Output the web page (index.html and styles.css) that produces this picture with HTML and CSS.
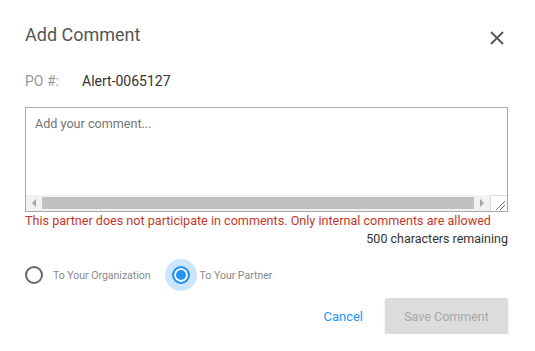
FILE: index.html
```html
<!DOCTYPE html>
<html lang="en">
<head>
    <meta charset="UTF-8">
    <meta name="viewport" content="width=device-width, initial-scale=1.0">
    <title>Add Comment</title>
    <link rel="stylesheet" href="styles.css">
</head>
<body>
    <div class="dialog">
        <div class="dialog-header">
            <h1 class="dialog-title">Add Comment</h1>
            <button class="close" aria-label="Close">
                <svg width="14" height="14" viewBox="0 0 14 14">
                    <path d="M1 1 L13 13 M13 1 L1 13" stroke="#555" stroke-width="1.8" fill="none"/>
                </svg>
            </button>
        </div>

        <div class="po-row">
            <span class="po-label">PO #:</span>
            <span class="po-value">Alert-0065127</span>
        </div>

        <div class="comment-box">
            <textarea class="comment-input" placeholder="Add your comment..."></textarea>
            <div class="hscroll">
                <span class="scroll-btn"><span class="tri-left"></span></span>
                <span class="scroll-thumb"></span>
                <span class="scroll-btn"><span class="tri-right"></span></span>
                <span class="resizer">
                    <svg width="16" height="16" viewBox="0 0 16 16">
                        <path d="M14 5 L5 14 M14 9 L9 14" stroke="#777" stroke-width="1" fill="none"/>
                    </svg>
                </span>
            </div>
        </div>
        <div class="error-msg">This partner does not participate in comments. Only internal comments are allowed</div>
        <div class="char-count">500 characters remaining</div>

        <div class="audience">
            <label class="radio">
                <span class="radio-mark"></span>
                To Your Organization
            </label>
            <label class="radio checked">
                <span class="radio-mark"></span>
                To Your Partner
            </label>
        </div>

        <div class="actions">
            <button class="btn-link">Cancel</button>
            <button class="btn-save" disabled>Save Comment</button>
        </div>
    </div>
</body>
</html>
```

FILE: styles.css
```css
body {
    margin: 0;
    background-color: #fff;
    font-family: Roboto, 'Liberation Sans', Arial, sans-serif;
    color: #333;
}
.dialog {
    padding: 0 27px 0 25px;
}
.dialog-header {
    display: flex;
    justify-content: space-between;
    align-items: center;
    padding-top: 23px;
}
.dialog-title {
    margin: 0;
    font-size: 18px;
    font-weight: 400;
    line-height: 24px;
    color: #555;
}
.close {
    border: none;
    background: none;
    padding: 0;
    margin: 6px 4px 0 0;
    width: 14px;
    height: 14px;
    cursor: pointer;
}
.close svg {
    display: block;
}
.po-row {
    margin-top: 24px;
    font-size: 14px;
    line-height: 20px;
    display: flex;
}
.po-label {
    width: 57px;
    color: #999;
}
.po-value {
    color: #333;
}
.comment-box {
    margin-top: 16px;
    border: 1px solid #a9a9a9;
}
.comment-input {
    display: block;
    width: 100%;
    height: 87px;
    box-sizing: border-box;
    border: none;
    outline: none;
    resize: none;
    padding: 8px 9px;
    font-family: Roboto, 'Liberation Sans', Arial, sans-serif;
    font-size: 12.6px;
    color: #333;
}
.comment-input::placeholder {
    color: #757575;
}
.hscroll {
    display: flex;
    height: 16px;
    background-color: #f1f1f1;
}
.scroll-btn {
    width: 16px;
    display: flex;
    align-items: center;
    justify-content: center;
}
.tri-left {
    border-top: 4px solid transparent;
    border-bottom: 4px solid transparent;
    border-right: 4px solid #a3a3a3;
}
.tri-right {
    border-top: 4px solid transparent;
    border-bottom: 4px solid transparent;
    border-left: 4px solid #a3a3a3;
}
.scroll-thumb {
    flex: 1;
    margin: 2px 0;
    background-color: #c1c1c1;
}
.resizer {
    width: 17px;
    box-sizing: border-box;
    background-color: #fff;
    border-left: 1px solid #dcdcdc;
    border-top: 1px solid #dcdcdc;
}
.resizer svg {
    display: block;
}
.error-msg {
    font-size: 12.6px;
    line-height: 18px;
    color: #c0392b;
}
.char-count {
    font-size: 12.5px;
    line-height: 18px;
    text-align: right;
    color: #333;
}
.audience {
    display: flex;
    align-items: center;
    gap: 21px;
    height: 32px;
    margin-top: 11px;
}
.radio {
    display: flex;
    align-items: center;
    gap: 10px;
    font-size: 10.5px;
    color: #888;
    cursor: pointer;
    position: relative;
    z-index: 0;
}
.radio-mark {
    position: relative;
    width: 18px;
    height: 18px;
    box-sizing: border-box;
    border: 2px solid #666;
    border-radius: 50%;
    background-color: #fff;
}
.radio.checked .radio-mark {
    border-color: #2196f3;
    background-color: #2196f3;
    box-shadow: inset 0 0 0 2px #fff;
}
.radio.checked .radio-mark::before {
    content: "";
    position: absolute;
    left: 50%;
    top: 50%;
    width: 32px;
    height: 32px;
    margin: -16px 0 0 -16px;
    border-radius: 50%;
    background-color: #cce5fb;
    z-index: -1;
}
.actions {
    display: flex;
    justify-content: flex-end;
    align-items: center;
    gap: 22px;
    margin-top: 7px;
}
.btn-link {
    border: none;
    background: none;
    padding: 0;
    font-family: Roboto, 'Liberation Sans', Arial, sans-serif;
    font-size: 13px;
    color: #2196f3;
    cursor: pointer;
}
.btn-save {
    width: 123px;
    height: 36px;
    border: none;
    border-radius: 2px;
    background-color: #dcdcdc;
    color: #a8a8a8;
    font-family: Roboto, 'Liberation Sans', Arial, sans-serif;
    font-size: 12.5px;
    box-shadow: 0 1px 2px rgba(0, 0, 0, 0.15);
}
```
